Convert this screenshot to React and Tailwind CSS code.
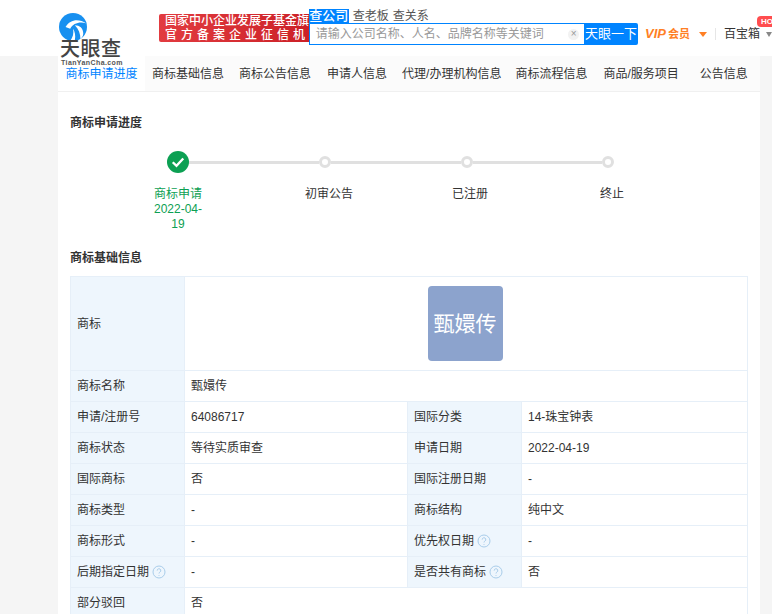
const FONT = 'font-["Liberation_Sans","Noto_Sans_CJK_SC",sans-serif]';

const TABS = [
  { label: '商标申请进度', cls: 'w-[87px] justify-center bg-white text-[#0084ff]' },
  { label: '商标基础信息', cls: 'ml-[7px] mr-[15px]' },
  { label: '商标公告信息', cls: 'mr-[16px]' },
  { label: '申请人信息', cls: 'mr-[15px]' },
  { label: '代理/办理机构信息', cls: 'mr-[14px]' },
  { label: '商标流程信息', cls: 'mr-[16px]' },
  { label: '商品/服务项目', cls: 'mr-[21px]' },
  { label: '公告信息', cls: '' },
];

const ROWS = [
  [['申请/注册号'], ['64086717'], ['国际分类'], ['14-珠宝钟表']],
  [['商标状态'], ['等待实质审查'], ['申请日期'], ['2022-04-19']],
  [['国际商标'], ['否'], ['国际注册日期'], ['-']],
  [['商标类型'], ['-'], ['商标结构'], ['纯中文']],
  [['商标形式'], ['-'], ['优先权日期', true], ['-']],
  [['后期指定日期', true], ['-'], ['是否共有商标', true], ['否']],
];

function Help() {
  return (
    <svg viewBox="0 0 14 14" className="ml-[3px] h-[14px] w-[14px]" fill="none" stroke="#a9cdea">
      <circle cx="7" cy="7" r="6" />
      <path d="M5.2 5.6a1.8 1.8 0 1 1 2.7 1.5c-.6.4-.9.7-.9 1.4" />
      <path d="M7 10v.8" />
    </svg>
  );
}

function Label({ children, help, inner }) {
  return (
    <div className={`flex items-center border-r border-[#e6eff8] bg-[#eef6fd] pl-[6px] ${inner ? 'border-l' : ''}`}>
      {children}
      {help && <Help />}
    </div>
  );
}

function Value({ children, span }) {
  return <div className={`flex items-center pl-[6px] ${span ? 'col-span-3' : ''}`}>{children}</div>;
}

function Logo() {
  return (
    <div className="relative z-10 mt-[13px] flex h-[54px] w-[64px] flex-col items-start">
      <svg viewBox="0 0 30 30" className="h-[30px] w-[30px]">
        <circle cx="15" cy="15" r="15" fill="#1890f0" />
        <path d="M7 15C12 6 22 6 29 11 22 9 15 11 12 17Z" fill="#fff" />
        <path d="M17 13c5 0 9 3 9 9 0 3-2 5-3 6 0-6-2-11-6-15Z" fill="#fff" />
        <path d="M15 17c2 3 3 7 2 12-2 1-4 1-5 1 3-4 4-8 3-13Z" fill="#fff" />
      </svg>
      <div className="mt-[-2px] ml-[2px] text-[20px] leading-[20px] font-medium tracking-[0.5px] whitespace-nowrap text-[#444]">天眼查</div>
      <div className="ml-[3px] text-[7px] leading-[8px] font-bold tracking-[0.4px] whitespace-nowrap text-[#555]">TianYanCha.com</div>
    </div>
  );
}

function Header() {
  return (
    <div className="flex h-[56px] bg-white pl-[58px]">
      <Logo />
      <div className="mt-[14px] ml-[37px] h-[28px] w-[150px] overflow-hidden rounded-l-[2px] bg-gradient-to-r from-[#e23b40] to-[#cc2027] pl-[6px] text-[12px] leading-[14px] font-medium text-white">
        <div className="whitespace-nowrap">国家中小企业发展子基金旗下</div>
        <div className="tracking-[4px] whitespace-nowrap">官方备案企业征信机构</div>
      </div>
      <div className="mt-[9px] w-[276px]">
        <div className="flex h-[14px] items-center text-[12px] text-[#555]">
          <span className="flex h-[14px] w-[40px] items-center justify-center bg-[#0084ff] text-[13px] font-medium text-white">查公司</span>
          <span className="ml-[4px]">查老板</span>
          <span className="ml-[4px]">查关系</span>
        </div>
        <div className="flex h-[22px] items-center border border-r-0 border-[#0084ff] bg-white pl-[6px] text-[12px] text-[#999]">
          <span className="flex-1">请输入公司名称、人名、品牌名称等关键词</span>
          <span className="mr-[5px] flex h-[11px] w-[11px] items-center justify-center rounded-full bg-[#f2f2f2] text-[10px] leading-none text-[#999]">×</span>
        </div>
      </div>
      <div className="mt-[23px] flex h-[22px] w-[54px] items-center justify-center rounded-r-[2px] bg-[#0084ff] text-[13px] text-white">天眼一下</div>
      <div className="mt-[23px] ml-[7px] flex h-[22px] items-center whitespace-nowrap text-[#ff7f24]">
        <span className="text-[13px] font-bold italic">VIP</span>
        <span className="ml-[2px] text-[11px] font-bold">会员</span>
        <span className="ml-[9px] h-0 w-0 shrink-0 border-x-[4px] border-t-[5px] border-x-transparent border-t-[#ff7f24]" />
        <span className="ml-[8px] h-[12px] w-px shrink-0 bg-[#e6e6e6]" />
        <span className="relative ml-[8px] text-[12px] text-[#333]">
          百宝箱
          <span className="absolute top-[-9px] left-[33px] h-[11px] w-[16px] overflow-hidden rounded-l-[4px] bg-[#ff4d4f] pl-[4px] text-[8px] leading-[11px] font-bold text-white">HOT</span>
        </span>
        <span className="ml-[6px] h-0 w-0 shrink-0 border-x-[3px] border-t-[5px] border-x-transparent border-t-[#888]" />
      </div>
    </div>
  );
}

function Tabs() {
  return (
    <div className="flex h-[36px] items-stretch border-b border-[#f0f0f0] bg-[#fbfbfb] text-[12px] text-[#333]">
      {TABS.map((t) => (
        <div key={t.label} className={`flex shrink-0 items-center whitespace-nowrap ${t.cls}`}>
          {t.label}
        </div>
      ))}
    </div>
  );
}

function Stepper() {
  return (
    <div className="mt-[21px]">
      <div className="flex items-center pl-[97px]">
        <div className="flex h-[22px] w-[22px] items-center justify-center rounded-full bg-[#0ca053]">
          <svg viewBox="0 0 12 12" className="h-[14px] w-[14px]" fill="none" stroke="#fff" strokeWidth="2">
            <path d="M1.5 6.2 4.7 9.2 10.5 3" />
          </svg>
        </div>
        <div className="h-[3px] w-[130px] bg-[#e0e0e0]" />
        <div className="h-[12px] w-[12px] rounded-full border-[3px] border-[#e0e0e0] bg-white" />
        <div className="h-[3px] w-[130px] bg-[#e0e0e0]" />
        <div className="h-[12px] w-[12px] rounded-full border-[3px] border-[#e0e0e0] bg-white" />
        <div className="h-[3px] w-[129px] bg-[#e0e0e0]" />
        <div className="h-[12px] w-[12px] rounded-full border-[3px] border-[#e0e0e0] bg-white" />
      </div>
      <div className="mt-[14px] flex pl-[82px] text-center leading-[15px]">
        <div className="w-[52px] break-words text-[#0ca053]">商标申请 2022-04-19</div>
        <div className="ml-[87px] w-[76px]">初审公告</div>
        <div className="ml-[65px] w-[76px]">已注册</div>
        <div className="ml-[66px] w-[76px]">终止</div>
      </div>
    </div>
  );
}

function InfoTable() {
  return (
    <div className="mt-[11px] grid grid-cols-[114px_222px_115px_1fr] border-x border-t border-[#e6eff8] [&>div]:border-b [&>div]:border-[#e6eff8]">
      <Label>商标</Label>
      <div className="col-span-3 flex h-[94px] items-center justify-center pr-[2px]">
        <div className="flex h-[75px] w-[75px] items-center justify-center rounded-[4px] bg-[#8ca3cd] text-[21px] text-white">甄嬛传</div>
      </div>
      <div className="col-span-4 grid h-[31px] grid-cols-subgrid">
        <Label>商标名称</Label>
        <Value span>甄嬛传</Value>
      </div>
      {ROWS.map((row, i) => (
        <div key={i} className="col-span-4 grid h-[31px] grid-cols-subgrid">
          <Label help={row[0][1]}>{row[0][0]}</Label>
          <Value>{row[1][0]}</Value>
          <Label inner help={row[2][1]}>{row[2][0]}</Label>
          <Value>{row[3][0]}</Value>
        </div>
      ))}
      <div className="col-span-4 grid h-[31px] grid-cols-subgrid">
        <Label>部分驳回</Label>
        <Value span>否</Value>
      </div>
    </div>
  );
}

export default function App() {
  return (
    <div className={`h-[614px] w-[772px] overflow-hidden bg-[#f5f5f5] text-[12px] text-[#333] ${FONT}`}>
      <Header />
      <div className="ml-[58px] w-[702px] bg-white">
        <Tabs />
        <div className="px-[12px] pt-[24px]">
          <div className="text-[12px] leading-[14px] font-bold text-[#333]">商标申请进度</div>
          <Stepper />
          <div className="mt-[19px] text-[12px] leading-[14px] font-bold text-[#333]">商标基础信息</div>
          <InfoTable />
        </div>
      </div>
    </div>
  );
}
